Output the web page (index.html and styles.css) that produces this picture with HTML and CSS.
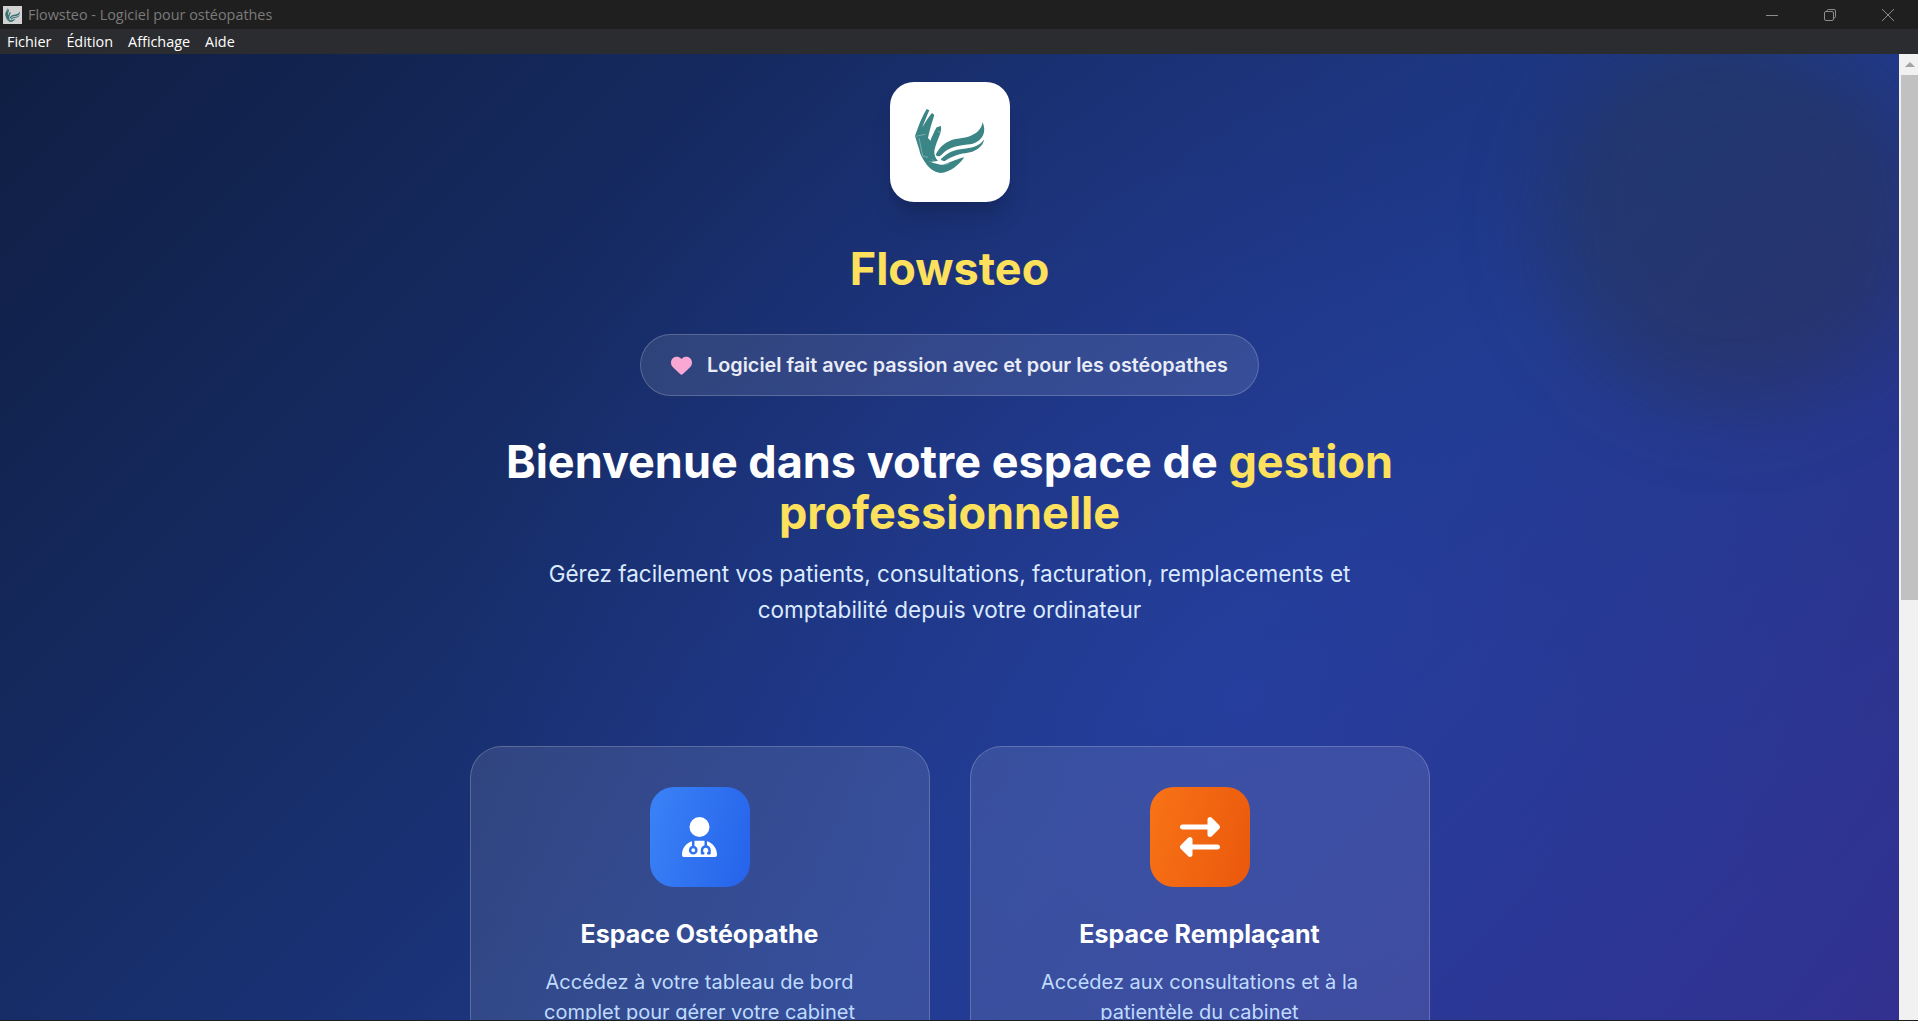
FILE: index.html
```html
<!DOCTYPE html>
<html lang="fr">
<head>
  <meta charset="UTF-8">
  <meta name="viewport" content="width=device-width, initial-scale=1.0">
  <title>Flowsteo - Logiciel pour ostéopathes</title>
  <link rel="stylesheet" href="styles.css">
</head>
<body>
  <svg class="defs" width="0" height="0">
    <symbol id="logo-mark" viewBox="120 100 240 220">
      <path class="logo-fill" d="M135 198C145 168 156 140 170 117L178 121C170 140 163 156 157 172C166 156 175 142 186 129L193 135C186 158 178 182 174 204L181 212C187 198 193 184 200 172L213 168C214 176 213 183 211 190C204 208 197 224 193 242C192 254 196 264 204 272C190 276 176 276 165 275C156 264 150 252 148 240C144 226 139 212 135 198Z"/>
      <path class="logo-fill" d="M197 254C208 232 226 214 256 207C290 204 330 196 338 157C350 185 340 212 306 222C270 226 240 228 217 252C210 260 203 262 197 254Z"/>
      <path class="logo-fill" d="M212 268C232 248 252 238 282 236C310 234 330 226 343 208C338 232 316 246 286 250C262 252 244 262 226 272C220 274 216 272 212 268Z"/>
      <path class="logo-fill" d="M160 268C182 276 200 284 216 284C232 282 256 268 283 262C268 284 240 308 212 309C192 308 172 292 160 268Z"/>
      <path class="logo-cut" d="M137 199L166 193M147 204L158 258L174 262M203 184L213 188M186 268C198 282 218 288 238 280"/>
    </symbol>
  </svg>

  <div class="window">
    <header class="titlebar">
      <svg class="app-icon" viewBox="0 0 19 18"><rect width="19" height="18" fill="#fff"/><use href="#logo-mark" x="1" y="1" width="17" height="16"/></svg>
      <span class="window-title">Flowsteo - Logiciel pour ostéopathes</span>
      <div class="window-controls">
        <svg viewBox="0 0 12 12"><path d="M0 6.5H12"/></svg>
        <svg viewBox="0 0 12 12"><rect x="0.5" y="2.5" width="9" height="9" rx="1.5"/><path d="M3 2.5V2A1.5 1.5 0 0 1 4.5 .5H10A1.5 1.5 0 0 1 11.5 2V7.5A1.5 1.5 0 0 1 10 9H9.5"/></svg>
        <svg viewBox="0 0 12 12"><path d="M0 0L12 12M12 0L0 12"/></svg>
      </div>
    </header>

    <nav class="menubar">
      <span>Fichier</span>
      <span>Édition</span>
      <span>Affichage</span>
      <span>Aide</span>
    </nav>

    <div class="viewport">
      <main class="page">
        <div class="blob"></div>

        <div class="logo-tile">
          <svg class="logo-svg" viewBox="60 36 360 360"><use href="#logo-mark" x="120" y="100" width="240" height="220"/></svg>
        </div>
        <h1 class="brand">Flowsteo</h1>

        <div class="pill">
          <svg class="heart" viewBox="0 0 512 512"><path d="M47.6 300.4L228.3 469.1c7.5 7 17.4 10.9 27.7 10.9s20.2-3.9 27.7-10.9L464.4 300.4c30.4-28.3 47.6-68 47.6-109.5v-5.8c0-69.9-50.5-129.5-119.4-141C347 36.5 300.6 51.4 268 84L256 96 244 84c-32.6-32.6-79-47.5-124.6-39.9C50.5 55.6 0 115.2 0 185.1v5.8c0 41.5 17.2 81.2 47.6 109.5z"/></svg>
          <span>Logiciel fait avec passion avec et pour les ostéopathes</span>
        </div>

        <h2 class="headline">Bienvenue dans votre espace de <span class="accent">gestion professionnelle</span></h2>
        <p class="lead">Gérez facilement vos patients, consultations, facturation, remplacements et comptabilité depuis votre ordinateur</p>

        <section class="cards">
          <article class="card">
            <div class="card-icon icon-blue">
              <svg class="icon-doctor" viewBox="0 0 448 512"><path d="M224 256A128 128 0 1 0 224 0a128 128 0 1 0 0 256zm-96 55.2C54 332.9 0 401.3 0 482.3C0 498.7 13.3 512 29.7 512H418.3c16.4 0 29.7-13.3 29.7-29.7c0-81-54-149.4-128-171.1V362c27.6 7.1 48 32.2 48 62v40c0 8.8-7.2 16-16 16H336c-8.8 0-16-7.2-16-16s7.2-16 16-16V424c0-17.7-14.3-32-32-32s-32 14.3-32 32v24c8.8 0 16 7.2 16 16s-7.2 16-16 16H256c-8.8 0-16-7.2-16-16V424c0-29.8 20.4-54.9 48-62V304.9c-6-.6-12.1-.9-18.3-.9H178.3c-6.2 0-12.3 .3-18.3 .9v65.4c23.1 6.9 40 28.3 40 53.7c0 30.9-25.1 56-56 56s-56-25.1-56-56c0-25.4 16.9-46.8 40-53.7V311.2zM144 448a24 24 0 1 0 0-48 24 24 0 1 0 0 48z"/></svg>
            </div>
            <h3 class="card-title">Espace Ostéopathe</h3>
            <p class="card-text">Accédez à votre tableau de bord complet pour gérer votre cabinet</p>
          </article>
          <article class="card">
            <div class="card-icon icon-orange">
              <svg class="icon-swap" viewBox="0 0 512 512"><path d="M32 96l320 0V32c0-12.9 7.8-24.6 19.8-29.6s25.7-2.2 34.9 6.9l96 96c6 6 9.4 14.1 9.4 22.6s-3.4 16.6-9.4 22.6l-96 96c-9.2 9.2-22.9 11.9-34.9 6.9s-19.8-16.6-19.8-29.6V160L32 160c-17.7 0-32-14.3-32-32s14.3-32 32-32zM480 352c17.7 0 32 14.3 32 32s-14.3 32-32 32H160v64c0 12.9-7.8 24.6-19.8 29.6s-25.7 2.2-34.9-6.9l-96-96c-6-6-9.4-14.1-9.4-22.6s3.4-16.6 9.4-22.6l96-96c9.2-9.2 22.9-11.9 34.9-6.9s19.8 16.6 19.8 29.6l0 64H480z"/></svg>
            </div>
            <h3 class="card-title">Espace Remplaçant</h3>
            <p class="card-text">Accédez aux consultations et à la patientèle du cabinet</p>
          </article>
        </section>
      </main>

      <aside class="scrollbar">
        <div class="scroll-arrow"></div>
        <div class="scroll-thumb"></div>
      </aside>
    </div>
  </div>
</body>
</html>
```

FILE: styles.css
```css
* {
  box-sizing: border-box;
}
html, body {
  margin: 0;
  height: 100%;
  overflow: hidden;
}
body {
  font-family: Inter, "Liberation Sans", sans-serif;
  background-color: #1f1f1f;
}
.defs {
  position: absolute;
}
.logo-fill {
  fill: #3c8586;
}
.logo-cut {
  fill: none;
  stroke: #fff;
  stroke-width: 1.6;
  opacity: 0.6;
}

.window {
  height: 1021px;
  display: flex;
  flex-direction: column;
  padding-bottom: 1px;
}
.titlebar {
  height: 29px;
  flex: none;
  display: flex;
  align-items: center;
  padding-left: 3px;
  background: #1f1f1f;
}
.app-icon {
  width: 19px;
  height: 18px;
  opacity: 0.8;
}
.window-title {
  margin-left: 6px;
  font-family: "Open Sans", sans-serif;
  font-size: 14.4px;
  color: #7b7b7b;
}
.window-controls {
  margin-left: auto;
  display: flex;
  gap: 46px;
  padding-right: 24px;
}
.window-controls svg {
  width: 12px;
  height: 12px;
  fill: none;
  stroke: #8c8c8c;
  stroke-width: 1;
  overflow: visible;
}
.menubar {
  height: 25px;
  flex: none;
  display: flex;
  align-items: center;
  gap: 15px;
  padding-left: 7px;
  background: #2b2c30;
  font-family: "Open Sans", sans-serif;
  font-size: 14.4px;
  color: #fff;
}

.viewport {
  flex: 1;
  min-height: 0;
  display: flex;
}
.page {
  position: relative;
  flex: 1;
  overflow: hidden;
  display: flex;
  flex-direction: column;
  align-items: center;
  padding-top: 28px;
  background:
    radial-gradient(circle 800px at 1250px 650px, rgba(50, 70, 190, 0.35), transparent),
    linear-gradient(135deg, #0f1e42 0%, #1e3a8a 63%, #322f8e 100%);
}
.page > * {
  flex: none;
}
.blob {
  position: absolute;
  top: -24px;
  right: -24px;
  width: 380px;
  height: 380px;
  border-radius: 50%;
  background: rgba(48, 46, 48, 0.3);
  filter: blur(40px);
}
.scrollbar {
  width: 19px;
  flex: none;
  background: #f1f1f1;
  padding: 0 0 0 2px;
}
.scroll-arrow {
  height: 21px;
  position: relative;
}
.scroll-arrow::before {
  content: "";
  position: absolute;
  left: 4px;
  top: 8px;
  border-left: 5px solid transparent;
  border-right: 5px solid transparent;
  border-bottom: 5px solid #a3a3a3;
}
.scroll-thumb {
  height: 525px;
  background: #c1c1c1;
}

.logo-tile {
  position: relative;
  width: 120px;
  height: 120px;
  border-radius: 24px;
  background: #fff;
  box-shadow: 0 20px 25px -5px rgba(0, 0, 0, 0.15), 0 8px 10px -6px rgba(0, 0, 0, 0.1);
}
.logo-svg {
  display: block;
  width: 120px;
  height: 120px;
}
.brand {
  position: relative;
  margin: 37px 0 0;
  font-size: 45px;
  line-height: 60px;
  font-weight: 700;
  color: #fde05c;
}
.pill {
  position: relative;
  margin-top: 35px;
  display: flex;
  align-items: center;
  gap: 15px;
  height: 62px;
  padding: 0 30px;
  border: 1px solid rgba(255, 255, 255, 0.2);
  border-radius: 31px;
  background: rgba(255, 255, 255, 0.1);
  font-size: 19.8px;
  font-weight: 600;
  color: #e9ecf7;
}
.heart {
  width: 21px;
  height: 21px;
  fill: #f9a8d4;
}
.headline {
  position: relative;
  margin: 40px 0 0;
  width: 960px;
  text-align: center;
  font-size: 45px;
  line-height: 51px;
  font-weight: 700;
  color: #fff;
}
.accent {
  color: #fde05c;
}
.lead {
  position: relative;
  margin: 18px 0 0;
  width: 896px;
  text-align: center;
  font-size: 22.5px;
  line-height: 35.5px;
  color: #dbeafe;
}
.cards {
  position: relative;
  margin-top: 119px;
  display: flex;
  gap: 40px;
}
.card {
  width: 460px;
  height: 400px;
  padding: 40px;
  border: 1px solid rgba(255, 255, 255, 0.2);
  border-radius: 32px;
  background: rgba(255, 255, 255, 0.1);
  text-align: center;
}
.card-icon {
  width: 100px;
  height: 100px;
  margin: 0 auto;
  border-radius: 24px;
  display: flex;
  align-items: center;
  justify-content: center;
  fill: #fff;
}
.icon-blue {
  background: linear-gradient(105deg, #3b82f6, #2563eb);
}
.icon-orange {
  background: linear-gradient(105deg, #f97316, #ea580c);
}
.icon-doctor {
  width: 35px;
  height: 40px;
}
.icon-swap {
  width: 40px;
  height: 40px;
}
.card-title {
  margin: 31px 0 0;
  font-size: 25px;
  line-height: 32px;
  font-weight: 700;
  color: #fff;
}
.card-text {
  margin: 17px 0 0;
  font-size: 20px;
  line-height: 30px;
  color: #bfdbfe;
}
```
